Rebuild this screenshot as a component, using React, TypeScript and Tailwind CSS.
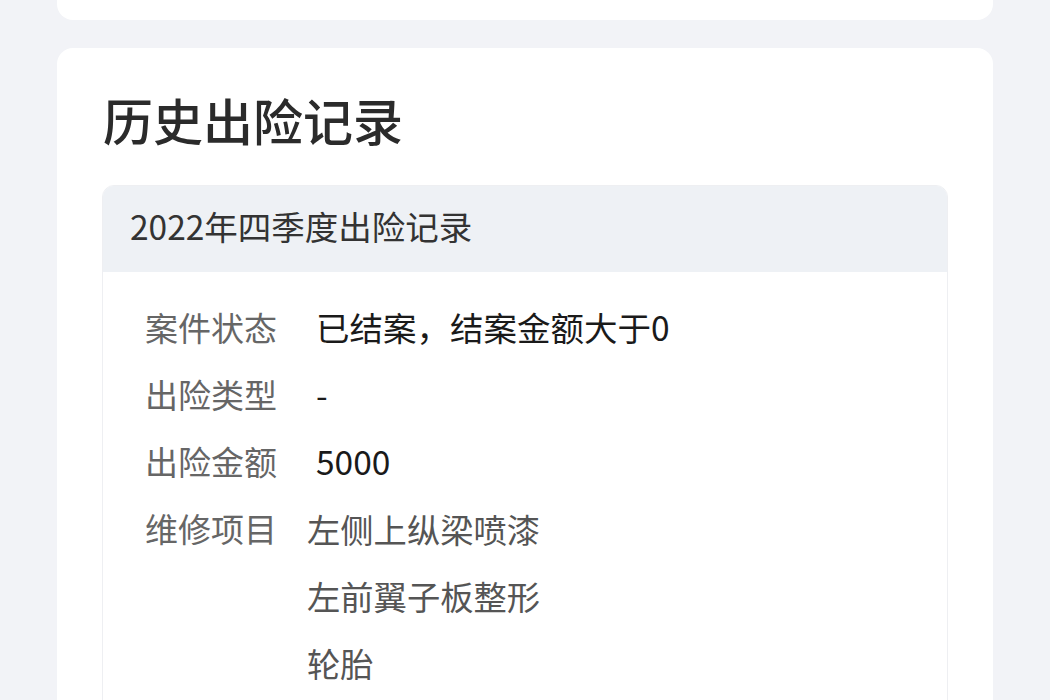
import React from "react";

const font = { fontFamily: '"Noto Sans CJK SC", "Noto Sans", sans-serif' };

export default function App() {
  const rows: [string, string][] = [
    ["案件状态", "已结案，结案金额大于0"],
    ["出险类型", "-"],
    ["出险金额", "5000"],
  ];
  const repairs = ["左侧上纵梁喷漆", "左前翼子板整形", "轮胎"];
  return (
    <div className="w-[1050px] h-[700px] overflow-hidden bg-[#f2f3f7]" style={font}>
      <div className="mx-[57px] w-[936px]">
        <div className="h-[20px] bg-white rounded-b-[16px]" />
        <div className="mt-[28px] bg-white rounded-t-[16px] px-[45px] pb-[40px]">
          <div className="pt-[41px] h-[137px] text-[50px] leading-[60px] font-medium text-[#2b2b2b] pl-[1px] whitespace-nowrap">
            历史出险记录
          </div>
          <div className="rounded-t-[12px] border border-[#eeeff2] overflow-hidden">
            <div className="h-[86px] bg-[#eef1f5] flex items-center pl-[27px] pb-[6px] text-[33.5px] text-[#333] whitespace-nowrap">
              2022年四季度出险记录
            </div>
            <div className="bg-white pt-[22px] pl-[42px] pb-[20px]">
              {rows.map(([l, v]) => (
                <div key={l} className="flex items-center h-[67px]">
                  <div className="w-[132px] shrink-0 whitespace-nowrap text-[33px] text-[#666]">{l}</div>
                  <div className="ml-[39px] whitespace-nowrap text-[33.5px] text-[#1a1a1a]">{v}</div>
                </div>
              ))}
              <div className="flex">
                <div className="w-[132px] shrink-0 whitespace-nowrap h-[67px] flex items-center text-[33px] text-[#666]">维修项目</div>
                <div className="ml-[30px] flex flex-col">
                  {repairs.map((r) => (
                    <div key={r} className="h-[67px] flex items-center whitespace-nowrap text-[33.3px] text-[#555]">
                      {r}
                    </div>
                  ))}
                </div>
              </div>
            </div>
          </div>
        </div>
      </div>
    </div>
  );
}
